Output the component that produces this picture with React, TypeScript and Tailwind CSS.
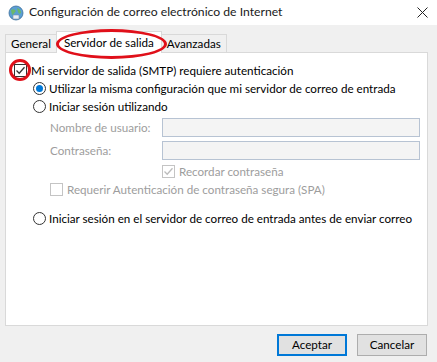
import React from "react";

const font = { fontFamily: 'Lato, "Noto Sans", sans-serif' };

function Radio({ checked }: { checked?: boolean }) {
  return (
    <span className="w-[13px] h-[13px] rounded-full border border-[#333] bg-white flex items-center justify-center shrink-0">
      {checked && <span className="w-[7px] h-[7px] rounded-full bg-[#0078d7]" />}
    </span>
  );
}

function Check({ checked, disabled }: { checked?: boolean; disabled?: boolean }) {
  return (
    <span
      className={`w-[13px] h-[13px] border flex items-center justify-center shrink-0 ${
        disabled ? "border-[#c4c4c4] bg-white" : "border-[#333] bg-white"
      }`}
    >
      {checked && (
        <svg width="11" height="11" viewBox="0 0 11 11">
          <path
            d="M1.5 5.5 L4.2 8.2 L9.5 2.2"
            fill="none"
            stroke={disabled ? "#bcbcbc" : "#333"}
            strokeWidth="1.3"
          />
        </svg>
      )}
    </span>
  );
}

function GlobeIcon() {
  return (
    <svg width="16" height="16" viewBox="0 0 16 16">
      <circle cx="8" cy="8" r="7" fill="#5a9fd4" />
      <path d="M3 5 Q6 3 8 6 Q6 9 4 10 Z" fill="#6bb86a" />
      <path d="M9 3 Q13 4 13 8 Q11 10 10 7 Z" fill="#6bb86a" />
      <circle cx="8" cy="8" r="7" fill="none" stroke="#3c6e9c" strokeWidth="0.8" />
      <path d="M5 10 L11 10 L11 14 L5 14 Z" fill="#e8eef5" stroke="#7b8fa6" strokeWidth="0.6" />
    </svg>
  );
}

export default function App() {
  return (
    <div className="w-[437px] h-[362px] bg-[#f0f0f0] flex flex-col text-[11.65px] text-black relative overflow-hidden whitespace-nowrap" style={font}>
      {/* title bar */}
      <div className="h-[25px] bg-white flex items-center pl-[8px] pr-[9px] shrink-0">
        <GlobeIcon />
        <span className="ml-[5px] text-[12.2px] text-[#1a1a1a]">
          Configuración de correo electrónico de Internet
        </span>
        <svg className="ml-auto" width="11" height="11" viewBox="0 0 11 11">
          <path d="M0.5 0.5 L10.5 10.5 M10.5 0.5 L0.5 10.5" stroke="#222" strokeWidth="1" />
        </svg>
      </div>

      {/* tabs */}
      <div className="flex items-end pl-[5px] mt-[6px] h-[21px] shrink-0 relative z-10">
        <div className="h-[18px] px-[5px] border border-b-0 border-[#d9d9d9] bg-[#f0f0f0] flex items-center">General</div>
        <div className="h-[22px] mb-[-1px] px-[7px] border border-b-0 border-[#d9d9d9] bg-white flex items-center -ml-px">Servidor de salida</div>
        <div className="h-[18px] px-[5px] border border-b-0 border-l-0 border-[#d9d9d9] bg-[#f0f0f0] flex items-center">Avanzadas</div>
      </div>

      {/* panel */}
      <div className="ml-[5px] mr-[9px] h-[274px] bg-white border border-[#d9d9d9] flex flex-col pt-[10px] pl-[8px] pr-[7px]">
        <div className="flex items-center h-[15px]">
          <Check checked />
          <span className="ml-[4px]">Mi servidor de salida (SMTP) requiere autenticación</span>
        </div>
        <div className="flex items-center h-[15px] mt-[3px] pl-[19px]">
          <Radio checked />
          <span className="ml-[3px]">Utilizar la misma configuración que mi servidor de correo de entrada</span>
        </div>
        <div className="flex items-center h-[15px] mt-[3px] pl-[19px]">
          <Radio />
          <span className="ml-[3px]">Iniciar sesión utilizando</span>
        </div>

        <div className="flex flex-col pl-[36px] text-[#9d9d9d] mt-[4px]">
          <div className="flex items-center h-[19px]">
            <span className="w-[112px]">Nombre de usuario:</span>
            <div className="flex-1 h-[19px] border border-[#b7c3d3] bg-[#f4f4f4]" />
          </div>
          <div className="flex items-center h-[19px] mt-[4px]">
            <span className="w-[112px]">Contraseña:</span>
            <div className="flex-1 h-[19px] border border-[#b7c3d3] bg-[#f4f4f4]" />
          </div>
          <div className="flex items-center h-[15px] mt-[4px] pl-[112px]">
            <Check checked disabled />
            <span className="ml-[4px]">Recordar contraseña</span>
          </div>
          <div className="flex items-center h-[15px] mt-[3px]">
            <Check disabled />
            <span className="ml-[4px]">Requerir Autenticación de contraseña segura (SPA)</span>
          </div>
        </div>

        <div className="flex items-center h-[15px] mt-[14px] pl-[19px]">
          <Radio />
          <span className="ml-[3px]">Iniciar sesión en el servidor de correo de entrada antes de enviar correo</span>
        </div>
      </div>

      {/* buttons */}
      <div className="flex justify-end gap-[10px] pr-[10px] mt-[8px]">
        <button className="w-[70px] h-[22px] bg-[#e1e1e1] border-2 border-[#0078d7] flex items-center justify-center">Aceptar</button>
        <button className="w-[70px] h-[22px] bg-[#e1e1e1] border border-[#adadad] flex items-center justify-center">Cancelar</button>
      </div>

      {/* red annotation ellipses */}
      <div className="absolute left-[56px] top-[29px] w-[111px] h-[30px] rounded-[50%] border-[3px] border-[#e0101a] z-20" />
      <div className="absolute left-[9px] top-[59px] w-[22px] h-[22px] rounded-[50%] border-[3px] border-[#e0101a] z-20" />
    </div>
  );
}
